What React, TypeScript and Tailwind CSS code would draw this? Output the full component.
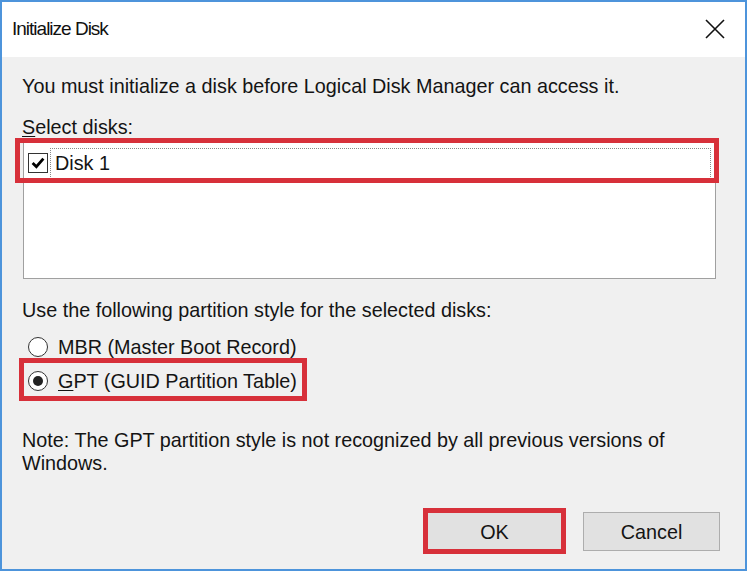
export default function App() {
  return (
    <div
      className="h-[577px] w-[750px] bg-white text-black"
      style={{ fontFamily: '"Liberation Sans", Arial, sans-serif' }}
    >
      <div className="flex h-[571px] w-[747px] flex-col border-2 border-[#4d94db]">
        {/* title bar */}
        <div className="flex h-[55px] shrink-0 items-center justify-between bg-white pl-[10px] pr-[20px]">
          <span className="text-[19px] tracking-[-1px] text-[#111]">Initialize Disk</span>
          <svg width="20" height="20" viewBox="0 0 20 20" className="mb-[2px]">
            <path d="M1 1 L19 19 M19 1 L1 19" stroke="#111" strokeWidth="1.6" />
          </svg>
        </div>

        {/* body */}
        <div className="flex flex-1 flex-col bg-[#f0f0f0] pl-[20px] pr-[25px] text-[19.8px] leading-[22px] text-[#141414]">
          <p className="mt-[18px]">You must initialize a disk before Logical Disk Manager can access it.</p>
          <p className="mt-[19px]">
            <u className="underline-offset-2">S</u>elect disks:
          </p>

          <div className="relative ml-[1px] mt-[2px] h-[139px] w-[693px] border border-[#a0a0a0] bg-white">
            <div className="flex h-[40px] items-center pl-[4px] pr-[4px] pt-[4px]">
              <div className="flex h-[20px] w-[20px] shrink-0 items-center justify-center border border-[#333] bg-white">
                <svg width="14" height="12" viewBox="0 0 13 11">
                  <path d="M1.5 5.5 L5 9 L11.5 1.5" stroke="#000" strokeWidth="2.6" fill="none" />
                </svg>
              </div>
              <div className="ml-[2px] flex h-[31px] flex-1 items-center border border-dotted border-[#8a8a8a] pl-[4px]">
                Disk 1
              </div>
            </div>
            <div className="absolute left-[-9px] top-[-3px] h-[45px] w-[704px] border-[5px] border-[#d7303a]" />
          </div>

          <p className="mt-[20px]">Use the following partition style for the selected disks:</p>

          <div className="mt-[15px] flex h-[22px] items-center pl-[6px]">
            <span className="h-[20px] w-[20px] shrink-0 rounded-full border border-[#333] bg-white" />
            <span className="ml-[10px]">MBR (Master Boot Record)</span>
          </div>

          <div className="relative mt-[12px] flex h-[22px] items-center pl-[6px]">
            <span className="flex h-[20px] w-[20px] shrink-0 items-center justify-center rounded-full border border-[#333] bg-white">
              <span className="h-[10px] w-[10px] rounded-full bg-[#222]" />
            </span>
            <span className="ml-[10px]">
              <u className="underline-offset-2">G</u>PT (GUID Partition Table)
            </span>
            <div className="absolute left-[-3px] top-[-12px] h-[43px] w-[288px] border-[5px] border-[#d7303a]" />
          </div>

          <p className="mt-[37px] leading-[23px]">
            Note: The GPT partition style is not recognized by all previous versions of
            <br />
            Windows.
          </p>

          <div className="mt-auto mb-[18px] flex justify-end gap-[20px]">
            <div className="relative">
              <button className="h-[39px] w-[137px] border border-[#adadad] bg-[#e1e1e1] text-[19.8px]">
                OK
              </button>
              <div className="absolute left-[-3px] top-[-4px] h-[46px] w-[143px] border-[5px] border-[#d7303a]" />
            </div>
            <button className="h-[39px] w-[137px] border border-[#adadad] bg-[#e1e1e1] text-[19.8px]">
              Cancel
            </button>
          </div>
        </div>
      </div>
    </div>
  );
}
